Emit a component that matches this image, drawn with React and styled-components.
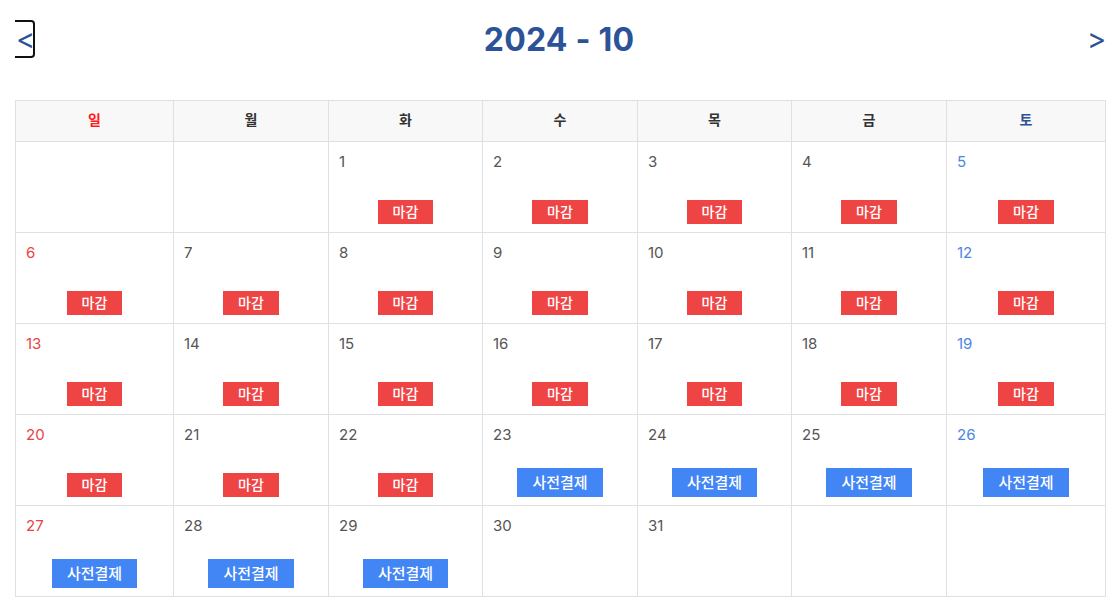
import React from 'react'
import styled, { createGlobalStyle } from 'styled-components'

const GlobalStyle = createGlobalStyle`
  body {
    margin: 0;
    background: #fff;
    font-family: Inter, "Noto Sans CJK KR", sans-serif;
  }
`

const WEEKDAYS = ['일', '월', '화', '수', '목', '금', '토']
const COLS = '158px 155px 154px 155px 154px 155px 159px'

// status per day of October 2024
const statusOf = (d) => (d <= 22 ? 'closed' : d <= 29 ? 'prepay' : null)

function buildWeeks() {
  const cells = [null, null]
  for (let d = 1; d <= 31; d++) cells.push(d)
  while (cells.length % 7) cells.push(null)
  const weeks = []
  for (let i = 0; i < cells.length; i += 7) weeks.push(cells.slice(i, i + 7))
  return weeks
}

function App() {
  const weeks = buildWeeks()
  return (
    <Page>
      <GlobalStyle />
      <Header>
        <PrevButton>&lt;</PrevButton>
        <Title>2024 - 10</Title>
        <NextButton>&gt;</NextButton>
      </Header>

      <Calendar>
        <HeadRow>
          {WEEKDAYS.map((w, i) => (
            <HeadCell key={w} day={i}>{w}</HeadCell>
          ))}
        </HeadRow>
        {weeks.map((week, wi) => (
          <WeekRow key={wi}>
            {week.map((d, i) => (
              <DayCell key={i}>
                {d && <DayNum day={i}>{d}</DayNum>}
                {d && statusOf(d) === 'closed' && <ClosedBadge>마감</ClosedBadge>}
                {d && statusOf(d) === 'prepay' && <PrepayBadge>사전결제</PrepayBadge>}
              </DayCell>
            ))}
          </WeekRow>
        ))}
      </Calendar>
    </Page>
  )
}

export default App

const Page = styled.div`
  padding: 0 12px 0 15px;
`

const Header = styled.div`
  height: 80px;
  margin-bottom: 20px;
  display: flex;
  align-items: center;
  justify-content: space-between;
`

const NavButton = styled.button`
  background: none;
  border: none;
  padding: 0;
  color: #2c5298;
  font-family: Inter, sans-serif;
  font-weight: 400;
  font-size: 29px;
  line-height: 1;
  cursor: pointer;
`

const PrevButton = styled(NavButton)`
  width: 20px;
  height: 38px;
  margin-top: -3px;
  border: 2px solid #111;
  border-left: none;
  border-radius: 0 4px 4px 0;
  text-align: left;
  padding: 0 0 0 1px;
`

const NextButton = styled(NavButton)`
  width: 18px;
  height: 38px;
  margin-top: -3px;
  text-align: right;
  padding: 0 2px 0 0;
`

const Title = styled.h1`
  margin: -2px 0 0 -4px;
  font-size: 32px;
  font-weight: 700;
  color: #2c5298;
  letter-spacing: 0.2px;
`

const Calendar = styled.div`
  border-top: 1px solid #e0e0e0;
  border-left: 1px solid #e0e0e0;
  width: 1090px;
`

const Row = styled.div`
  display: grid;
  grid-template-columns: ${COLS};
`

const HeadRow = styled(Row)`
  background: #f8f8f8;
`

const WeekRow = styled(Row)``

const HeadCell = styled.div`
  height: 41px;
  box-sizing: border-box;
  border-right: 1px solid #e0e0e0;
  border-bottom: 1px solid #e0e0e0;
  display: flex;
  align-items: center;
  justify-content: center;
  padding-bottom: 4px;
  font-size: 14px;
  font-weight: 600;
  color: ${(p) => (p.day === 0 ? '#ff1a1a' : p.day === 6 ? '#2c5298' : '#333')};
`

const DayCell = styled.div`
  height: 91px;
  border-right: 1px solid #e0e0e0;
  border-bottom: 1px solid #e0e0e0;
  display: flex;
  flex-direction: column;
  align-items: center;
  justify-content: space-between;
  padding: 10px 0 8px;
  box-sizing: border-box;
`

const DayNum = styled.div`
  align-self: flex-start;
  padding-left: 10px;
  font-size: 15px;
  line-height: 20px;
  color: ${(p) => (p.day === 0 ? '#e84444' : p.day === 6 ? '#4a86e8' : '#555')};
`

const ClosedBadge = styled.span`
  background: #ef4444;
  color: #fff;
  font-size: 14px;
  line-height: 24px;
  height: 24px;
  padding: 0 15px;
  font-weight: 500;
`

const PrepayBadge = styled.span`
  background: #4285f4;
  color: #fff;
  font-size: 15px;
  line-height: 29px;
  height: 29px;
  padding: 0 15px;
  font-weight: 500;
`
